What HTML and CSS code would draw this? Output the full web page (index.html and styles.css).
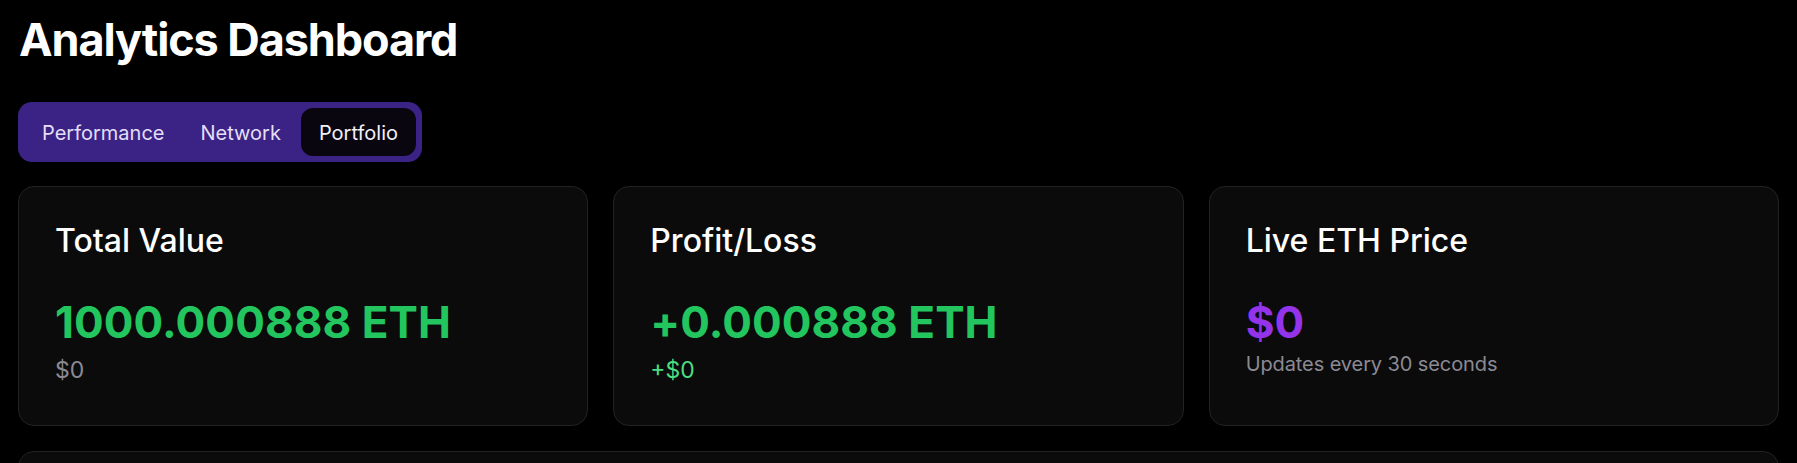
FILE: index.html
```html
<!DOCTYPE html>
<html lang="en">
<head>
<meta charset="utf-8">
<title>Analytics Dashboard</title>
<link rel="stylesheet" href="styles.css">
</head>
<body>
<main class="page">
  <h1 class="title">Analytics Dashboard</h1>
  <nav class="tabs">
    <button class="tab">Performance</button>
    <button class="tab">Network</button>
    <button class="tab tab-active">Portfolio</button>
  </nav>
  <section class="stats">
    <div class="card">
      <h2 class="card-title">Total Value</h2>
      <div class="value value-green">1000.000888 ETH</div>
      <div class="sub sub-muted">$0</div>
    </div>
    <div class="card">
      <h2 class="card-title">Profit/Loss</h2>
      <div class="value value-green">+0.000888 ETH</div>
      <div class="sub sub-green">+$0</div>
    </div>
    <div class="card">
      <h2 class="card-title">Live ETH Price</h2>
      <div class="value value-purple">$0</div>
      <div class="note">Updates every 30 seconds</div>
    </div>
  </section>
  <section class="card card-wide"></section>
</main>
</body>
</html>
```

FILE: styles.css
```css
html, body {
  margin: 0;
  padding: 0;
  background: #000;
  overflow: hidden;
}

body {
  font-family: Inter, "Noto Sans", "Liberation Sans", sans-serif;
  color: #fff;
}

.page {
  padding: 13px 18px 0 18px;
  display: flex;
  flex-direction: column;
}

.title {
  margin: 0;
  font-size: 45px;
  line-height: 54px;
  font-weight: 700;
  letter-spacing: -1.1px;
  padding-left: 1px;
}

.tabs {
  margin-top: 35px;
  align-self: flex-start;
  display: flex;
  padding: 6px;
  background: #3a2384;
  border-radius: 14px;
  width: 392px;
  box-sizing: content-box;
}

.tab {
  font-family: inherit;
  font-size: 20px;
  line-height: 48px;
  height: 48px;
  font-weight: 400;
  color: #e4def7;
  background: transparent;
  border: 0;
  padding: 1px 18px 0 18px;
  border-radius: 12px;
  cursor: pointer;
}

.tab-active {
  background: #09060f;
  color: #f2f0fa;
  margin-left: auto;
}

.stats {
  margin-top: 24px;
  display: grid;
  grid-template-columns: repeat(3, 1fr);
  gap: 25px;
}

.card {
  background: #0b0b0b;
  border: 1px solid #222224;
  border-radius: 16px;
  height: 240px;
  box-sizing: border-box;
  padding: 34px 36px 0 36px;
}

.card-title {
  margin: 0;
  font-size: 32px;
  line-height: 40px;
  font-weight: 500;
  letter-spacing: 0;
  color: #fff;
}

.value {
  margin-top: 35px;
  font-size: 44px;
  line-height: 53px;
  font-weight: 700;
  letter-spacing: 0.1px;
}

.value-green { color: #22c55e; }
.value-purple { color: #9333ea; }

.sub {
  margin-top: 3px;
  font-size: 23px;
  line-height: 36px;
  font-weight: 400;
}

.sub-muted { color: #8b8a93; }
.sub-green { color: #4ade80; }

.note {
  margin-top: 1px;
  font-size: 20px;
  line-height: 28px;
  color: #8b8a93;
  letter-spacing: -0.1px;
}

.card-wide {
  margin-top: 25px;
  height: 300px;
}
```
